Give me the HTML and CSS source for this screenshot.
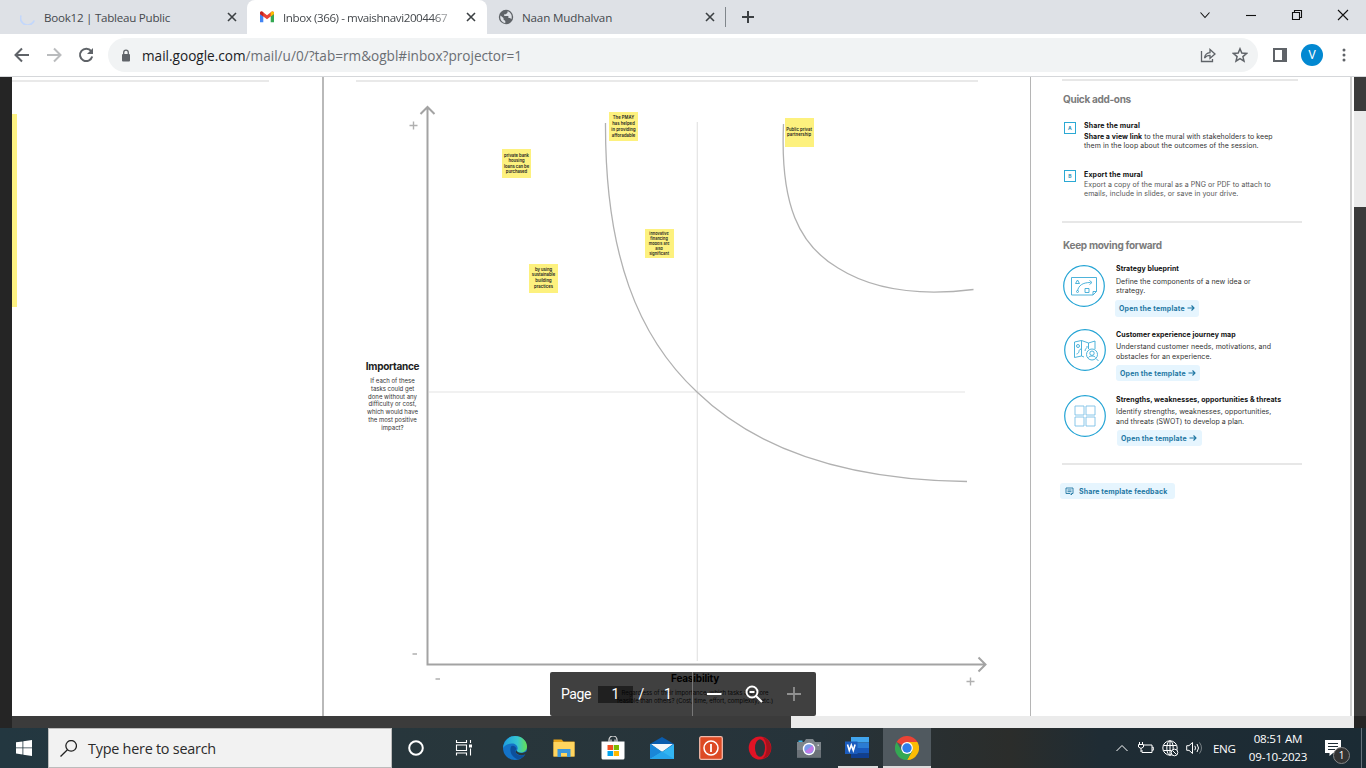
FILE: index.html
```html
<!DOCTYPE html>
<html lang="en">
<head>
<meta charset="utf-8">
<title>Inbox</title>
<link rel="stylesheet" href="styles.css">
</head>
<body>
<div class="screen">
  <header class="tabs">
    <div class="tab tab-first">
      <svg class="fav" viewBox="0 0 16 16"><path d="M1 6.500A7 7 0 0 0 14.200 11.500" fill="none" stroke="#c3d7fb" stroke-width="1.800"/></svg>
      <span class="tab-title">Book12 | Tableau Public</span>
      <svg class="close" viewBox="0 0 10 10"><path d="M1 1L9 9M9 1L1 9"/></svg>
    </div>
    <div class="tab tab-active">
      <svg class="fav" viewBox="0 0 16 16"><path d="M1 13.300V4.500L4.300 7v6.300z" fill="#4285f4"/><path d="M11.700 13.300V7L15 4.500v8.800z" fill="#34a853"/><path d="M1 5V4c0-1.600 1.500-1.900 2.500-1.200L8 6.200l4.500-3.400C13.500 2.100 15 2.400 15 4v1L8 10.200z" fill="#ea4335"/><path d="M11.700 3.400l.8-.6C13.500 2.100 15 2.400 15 4v1l-3.300 2.500z" fill="#fbbc04"/><path d="M1 5V4c0-1.600 1.500-1.900 2.500-1.200l.8.6v4.100z" fill="#c5221f"/></svg>
      <span class="tab-title fade">Inbox (366) - mvaishnavi2004467</span>
      <svg class="close" viewBox="0 0 10 10"><path d="M1 1L9 9M9 1L1 9"/></svg>
    </div>
    <div class="tab tab-last">
      <svg class="fav" viewBox="0 0 16 16"><circle cx="8" cy="8" r="7.200" fill="#5f6368"/><path d="M2.500 6.500l3 2.500v1.500L7.300 12v2.200A6 6 0 0 1 2.500 6.500zM9.500 2.200v1.600L7.800 5.300H6.200v1.600h4.200v2h1.700l1.200 1.300A6 6 0 0 0 9.500 2.200z" fill="#dee1e6"/></svg>
      <span class="tab-title">Naan Mudhalvan</span>
      <svg class="close" viewBox="0 0 10 10"><path d="M1 1L9 9M9 1L1 9"/></svg>
    </div>
    <svg class="newtab" viewBox="0 0 12 12"><path d="M6 0v12M0 6h12" stroke="#3c4043" stroke-width="2"/></svg>
    <div class="winctl">
      <svg viewBox="0 0 12 12"><path d="M1.500 3.500L6 8.500l4.500-5"/></svg>
      <svg viewBox="0 0 12 12"><path d="M1 6.500h10"/></svg>
      <svg viewBox="0 0 12 12"><path d="M1.500 3.500h7v7h-7zM3.500 3.500v-2h7v7h-2"/></svg>
      <svg viewBox="0 0 12 12"><path d="M1 1l10 10M11 1L1 11"/></svg>
    </div>
  </header>
  <nav class="toolbar">
    <svg class="nav back" viewBox="0 0 16 16"><path d="M15 8H2M8 1.500L1.500 8L8 14.500" stroke="#5f6368"/></svg>
    <svg class="nav" viewBox="0 0 16 16"><path d="M1 8h13M8 1.500L14.500 8L8 14.500" stroke="#babcbe"/></svg>
    <svg class="nav" viewBox="0 0 16 16"><path d="M13.200 4.200A6.200 6.200 0 1 0 14.200 9.500" stroke="#5f6368"/><path d="M15 1v6H9z" fill="#5f6368"/></svg>
    <div class="omnibox">
      <svg class="lock" viewBox="0 0 10 13"><rect x="1" y="5" width="8" height="7.500" rx="1" fill="#5f6368"/><path d="M2.700 5V3.500a2.300 2.300 0 0 1 4.600 0V5" fill="none" stroke="#5f6368" stroke-width="1.300"/></svg>
      <span class="url"><b>mail.google.com</b>/mail/u/0/?tab=rm&amp;ogbl#inbox?projector=1</span>
      <svg class="share" viewBox="0 0 16 16"><path d="M1.500 4v10.500h11V12M4.500 11C5 7.500 7 5.800 10 5.600V2.500L15 7l-5 4.300V8.300C7.500 8.300 6 9 4.500 11z"/></svg>
      <svg class="star" viewBox="0 0 16 16"><path d="M8 1.800l1.800 4.300 4.700.4-3.600 3.100 1.100 4.600L8 11.700l-4 2.500 1.100-4.600L1.500 6.500l4.700-.4z"/></svg>
    </div>
    <svg class="side" viewBox="0 0 14 14"><path d="M1 1h12v12H1z" fill="none" stroke="#5f6368" stroke-width="2"/><path d="M9 1h4v12H9z" fill="#5f6368"/></svg>
    <span class="avatar">V</span>
    <svg class="more" viewBox="0 0 4 14"><circle cx="2" cy="2" r="1.500"/><circle cx="2" cy="7" r="1.500"/><circle cx="2" cy="12" r="1.500"/></svg>
  </nav>

  <main class="viewer">
    <div class="gutter"></div>
    <div class="board">
      <section class="col-left"><div class="rule-left"></div><div class="strip"></div></section>
      <section class="canvas">
        <svg class="chart" viewBox="324 77 706 639">
          <path d="M356 81h622" stroke="#e9e9e9" stroke-width="2"/>
          <path d="M697.300 122v539" stroke="#e4e4e4" stroke-width="1.200"/>
          <path d="M429 392h536" stroke="#e4e4e4" stroke-width="1.200"/>
          <path d="M605.500 123C605 255 638 337 697 392C763 456 860 480 967 481.500" class="curve"/>
          <path d="M783.500 124C780 205 799 245 838 268C873 290 920 296 973.500 289.500" class="curve"/>
          <path d="M427.500 108v556.500H985M420.500 114l7-7 7 7M978.500 657.500l7 7-7 7" class="axis"/>
          <path d="M409.500 125.500h8M413.500 121.500v8M412.500 654h4.500M435.500 679h4.500M966.500 681.500h8M970.500 677.500v8" stroke="#b0b0b0" stroke-width="1.400"/>
        </svg>
        <div class="importance"><h2>Importance</h2><p>If each of these<br>tasks could get<br>done without any<br>difficulty or cost,<br>which would have<br>the most positive<br>impact?</p></div>
        <div class="feasibility"><h2>Feasibility</h2><p>Regardless of their importance, which tasks are more<br>feasible than others? (Cost, time, effort, complexity, etc.)</p></div>
        <div class="note n1">The PMAY<br>has helped<br>in providing<br>afforadable</div>
        <div class="note n2">private bank<br>housing<br>loans can be<br>purchased</div>
        <div class="note n3">by using<br>sustainable<br>building<br>practices</div>
        <div class="note n4">innovative<br>financing<br>models are<br>also<br>significant</div>
        <div class="note n5">Public privat<br>partnership</div>
        <div class="pager">
          <span class="pg">Page</span><span class="pg-input">1</span><span class="pg-slash">/</span><span class="pg-total">1</span>
          <i class="pg-div"></i>
          <svg class="pg-minus" viewBox="0 0 16 16"><path d="M1 8h14.500" stroke="#fff" stroke-width="2"/></svg>
          <svg class="pg-zoom" viewBox="0 0 18 18"><circle cx="7" cy="7" r="5.500" fill="none" stroke="#fff" stroke-width="2"/><path d="M11 11l6 6M4.500 7h5" stroke="#fff" stroke-width="2"/></svg>
          <svg class="pg-plus" viewBox="0 0 16 16"><path d="M8 1v14M1 8h14" stroke="#909090" stroke-width="1.800"/></svg>
        </div>
      </section>
      <aside class="panel">
        <div class="rule r1"></div>
        <h3 class="head h-quick">Quick add-ons</h3>
        <div class="addon a1"><span class="box">A</span><div><h4>Share the mural</h4><p><b>Share a view link</b> to the mural with stakeholders to keep<br>them in the loop about the outcomes of the session.</p></div></div>
        <div class="addon a2"><span class="box">B</span><div><h4>Export the mural</h4><p>Export a copy of the mural as a PNG or PDF to attach to<br>emails, include in slides, or save in your drive.</p></div></div>
        <div class="rule r2"></div>
        <h3 class="head h-keep">Keep moving forward</h3>
        <div class="tpl p1">
          <svg class="disc" viewBox="0 0 42 42"><circle cx="21" cy="21" r="20.300" class="ring"/><path d="M8.500 12.500h25v14l-3.500 3.500h-21.500zM33.500 26.500h-3.500v3.500M12.500 18.500l2-3.500 2 3.500zM22 23.500h4v4h-4zM14.500 26c1-5.500 5-8.500 13-8.500M26.500 15.500l2.500 2-2.500 2" class="ico"/><circle cx="14.500" cy="26.500" r="1" class="ico"/></svg>
          <div><h4>Strategy blueprint</h4><p>Define the components of a new idea or<br>strategy.</p><a class="btn"><span>Open the template</span><svg class="arr" viewBox="0 0 8 8"><path d="M.5 4h6M4.500 1.500L7 4 4.500 6.500"/></svg></a></div>
        </div>
        <div class="tpl p2">
          <svg class="disc" viewBox="0 0 42 42"><circle cx="21" cy="21" r="20.300" class="ring"/><path d="M20 28l-2.500-1-7 1.500V13l7-1.500 7 2.500 6.500-2v8M17.500 11.500V27M24.500 14v6M12.500 25c4-1 1-4 4.500-5M21 22c0-3 3-3 2-5" class="ico"/><circle cx="14" cy="17" r="1.500" class="ico"/><circle cx="28" cy="25.500" r="5.500" class="ico"/><circle cx="28" cy="24.200" r="2.200" class="ico"/><path d="M24.500 28.500c1-2 6-2 7 0M32 29.500l2.500 2.500" class="ico"/></svg>
          <div><h4>Customer experience journey map</h4><p>Understand customer needs, motivations, and<br>obstacles for an experience.</p><a class="btn"><span>Open the template</span><svg class="arr" viewBox="0 0 8 8"><path d="M.5 4h6M4.500 1.500L7 4 4.500 6.500"/></svg></a></div>
        </div>
        <div class="tpl p3">
          <svg class="disc" viewBox="0 0 42 42"><circle cx="21" cy="21" r="20.300" class="ring"/><path d="M11 11h9v9h-9zM22 11h9v9h-9zM11 22h9v9h-9zM22 22h9v9h-9z" class="ico sq"/></svg>
          <div><h4>Strengths, weaknesses, opportunities &amp; threats</h4><p>Identify strengths, weaknesses, opportunities,<br>and threats (SWOT) to develop a plan.</p><a class="btn"><span>Open the template</span><svg class="arr" viewBox="0 0 8 8"><path d="M.5 4h6M4.500 1.500L7 4 4.500 6.500"/></svg></a></div>
        </div>
        <div class="rule r3"></div>
        <a class="btn feedback"><svg class="chat" viewBox="0 0 9 9"><path d="M1 1h7v5.500H6.500V8L5 6.500H1zM2.500 3h4M2.500 4.700h4"/></svg><span>Share template feedback</span></a>
      </aside>
    </div>
    <div class="vscroll"><div class="vthumb"></div></div>
    <div class="gutter"></div>
    <div class="hscroll"><div class="hthumb"></div></div>
    <div class="corner"></div>
  </main>

  <footer class="taskbar">
    <div class="start"><svg viewBox="0 0 16 16"><path d="M0 2.300L6.500 1.400v6.100H0zM7.300 1.300L16 0v7.500H7.300zM0 8.300h6.500v6.200L0 13.600zM7.300 8.300H16V16l-8.700-1.300z" fill="#fff"/></svg></div>
    <div class="search"><svg viewBox="0 0 16 16"><circle cx="10.500" cy="5.500" r="5" /><path d="M7 9.200L.5 15.500"/></svg><span>Type here to search</span></div>
    <div class="sys"><svg viewBox="0 0 24 24"><circle cx="12" cy="12" r="6.800" fill="none" stroke="#fff" stroke-width="2"/></svg></div>
    <div class="sys"><svg viewBox="0 0 24 24"><path d="M4.500 4v2.500h10V4M4.500 19.500V17h10v2.500M4.500 9h10v5.500h-10zM18.500 4v3M18.500 12.500v7" fill="none" stroke="#fff" stroke-width="1.100"/><path d="M17 8.500h3v3h-3z" fill="#fff"/></svg></div>
    <div class="apps">
      <div class="app"><svg viewBox="0 0 24 24"><defs><linearGradient id="eg" x1="0" x2="1"><stop offset="0" stop-color="#1e9ee0"/><stop offset=".6" stop-color="#36c6d0"/><stop offset="1" stop-color="#66e04f"/></linearGradient></defs><circle cx="12" cy="12" r="12" fill="#1473c8"/><path d="M.3 10C1.500 4 6.500 0 12 0c7 0 12 5 12 10.500 0 4-3 6-6 6-2.500 0-4.500-1-4-2.200C16 11 13 7.500 9 7.500 5 7.500 1.500 9 .3 12z" fill="url(#eg)"/><path d="M8 10.500c-2 5 1 11 7 13A12 12 0 0 0 22 18.500c-4 2-9 1-9.500-2.500-.3-1.700.5-2.500 1-3-1-3-4-4-5.500-2.500z" fill="#0d4f9c"/><path d="M13.500 14.300C15 18 20 17.500 23.800 15.200l.7 2.300-2.500 1c-4 1.500-8.500.5-9.500-2.500z" fill="#29363c"/></svg></div>
      <div class="app"><svg viewBox="0 0 24 24"><path d="M1.500 3.500h8l2 2h11v15h-21z" fill="#e7a419"/><path d="M1.500 6h21v14.500h-21z" fill="#ffd55f"/><path d="M5.500 13h13v8h-3.500v-4H9v4H5.500z" fill="#3b97dc"/></svg></div>
      <div class="app"><svg viewBox="0 0 24 24"><path d="M.5 5.500h23V22q0 1.500-1.500 1.500H2Q.5 23.500.5 22z" fill="#fff"/><path d="M8 6V4a4 4 0 0 1 8 0v2M10 6V3.500M14 6V3.500" fill="none" stroke="#ddd" stroke-width="1.200"/><path d="M6.500 9H12v5H6.500z" fill="#f25022"/><path d="M12.700 9H18v5h-5.300z" fill="#7fba00"/><path d="M6.500 15H12v5H6.500z" fill="#00a4ef"/><path d="M12.700 15H18v5h-5.300z" fill="#ffb900"/></svg></div>
      <div class="app"><svg viewBox="0 0 24 24"><path d="M0 8L12 1l12 7-3 6H3z" fill="#0a5cad"/><path d="M1 8h22l-11 8z" fill="#f4f7fa"/><path d="M0 8l12 8 12-8v15H0z" fill="#33b5f2"/><path d="M0 23V8l12 8z" fill="#1a86d8"/><path d="M0 23l12-7.500L24 23z" fill="#27a5ec"/></svg></div>
      <div class="app"><svg viewBox="0 0 24 24"><rect x=".7" y=".7" width="22.600" height="22.600" rx="1.500" fill="#dd4a24" stroke="#f0b8a8" stroke-width="1.300"/><circle cx="12" cy="12" r="7" fill="none" stroke="#fff" stroke-width="1.500"/><path d="M12 8v8" stroke="#fff" stroke-width="1.800"/></svg></div>
      <div class="app"><svg viewBox="0 0 24 24"><ellipse cx="12" cy="12" rx="11.300" ry="11.500" fill="#e01325"/><path d="M14 1.200C26 3 26 21 14 22.800c6-3 6-18.500 0-21.600z" fill="#a5121c"/><ellipse cx="12" cy="12" rx="5" ry="8.700" fill="#29363c"/></svg></div>
      <div class="app"><svg viewBox="0 0 24 24"><path d="M0 6h7l2-3h7l2 3h6v15.500H0z" fill="#7d858b"/><path d="M0 14h24v7.500H0z" fill="#6b7278"/><path d="M1.500 4.500h4V6h-4z" fill="#35b6ea"/><circle cx="12" cy="13" r="6.200" fill="#fff"/><circle cx="12" cy="13" r="4.800" fill="#7b9bea"/><path d="M8 15.500l7.500-6A4.800 4.800 0 0 1 8 15.500z" fill="#c07ae4"/><path d="M20.500 8.500h1.500V10h-1.500z" fill="#d0d4d6"/></svg></div>
      <div class="app word"><svg viewBox="0 0 24 24"><path d="M6 1h18v5.500H6z" fill="#41a5ee"/><path d="M6 6.500h18V12H6z" fill="#2b7cd3"/><path d="M6 12h18v5.500H6z" fill="#185abd"/><path d="M6 17.500h18V22H6z" fill="#103f91"/><path d="M0 5.500h12.500V18H0z" fill="#1b5cbe"/><path d="M2.500 8.500l1.800 6 2-5.500 2 5.500 1.800-6" fill="none" stroke="#fff" stroke-width="1.600"/></svg></div>
      <div class="app chrome"><svg viewBox="0 0 24 24"><path d="M12 12L1.600 6A12 12 0 0 1 22.400 6z" fill="#ea4335"/><path d="M12 6h10.400A12 12 0 0 1 12 24l5.200-9z" fill="#fbbc04"/><path d="M1.600 6l5.200 9L12 18l5.200-3L12 24A12 12 0 0 1 1.600 6z" fill="#34a853"/><circle cx="12" cy="12" r="5.900" fill="#fff"/><circle cx="12" cy="12" r="4.700" fill="#2f7de9"/></svg></div>
    </div>
    <div class="tray">
      <svg class="up" viewBox="0 0 12 8"><path d="M.5 7L6 1.500 11.500 7"/></svg>
      <svg class="bat" viewBox="0 0 16 12"><path d="M6 3h8v7.500H4V8M14 5.200h1.300v3H14M1.500 0v2.500M4.500 0v2.500M.5 2.500h5V5L3 6.500.5 5zM3 6.500V10"/></svg>
      <svg class="net" viewBox="0 0 17 17"><circle cx="8" cy="8" r="7.200"/><ellipse cx="8" cy="8" rx="3.200" ry="7.200"/><path d="M1.500 5.500h13M1.500 10.500h8M8 1v14"/><circle cx="12.500" cy="12.500" r="3.300" fill="#1e2c34"/><path d="M10.500 10.500l4 4"/></svg>
      <svg class="vol" viewBox="0 0 17 14"><path d="M.7 4.700H3L6.500 1.500v11L3 9.300H.7zM8.800 4.800q1.500 2.200 0 4.400M11 3q3 4 0 8"/><path d="M13.500 1.500q4 5.500 0 11" opacity=".4"/></svg>
      <span class="lang">ENG</span>
      <div class="clock"><span>08:51 AM</span><span>09-10-2023</span></div>
      <div class="action"><svg viewBox="0 0 16 16"><path d="M0 0h16v13H8l-3.500 3V13H0z" fill="#fff"/><path d="M3 3.500h10M3 6.500h10M3 9.500h7" stroke="#1e2c34"/></svg><span class="badge">1</span></div>
      <i class="peek"></i>
    </div>
  </footer>
</div>
</body>
</html>
```

FILE: styles.css
```css
* { box-sizing: border-box; }
body { margin: 0; font-family: "Open Sans", "Noto Sans", sans-serif; overflow: hidden; }
h2, h3, h4, p { margin: 0; }
svg { display: block; flex: none; }
.screen { width: 1366px; height: 768px; display: flex; flex-direction: column; }

.tabs { height: 34px; background: #dee1e6; display: flex; align-items: center; }
.tab { height: 34px; display: flex; align-items: center; color: #45494d; font-size: 11.6px; letter-spacing: -.25px; }
.tab-first { width: 247px; padding: 0 10px 0 20px; border-bottom-right-radius: 8px; }
.tab-active { width: 240px; padding: 0 11px 0 12px; background: #fff; border-radius: 8px 8px 0 0; }
.tab-last { width: 239px; padding: 0 11px; background: linear-gradient(#80868b, #80868b) right center / 1px 20px no-repeat; letter-spacing: -.15px; }
.fav { width: 16px; height: 16px; margin-right: 8px; }
.tab-title { flex: 1; white-space: nowrap; overflow: hidden; }
.tab .close { width: 10px; height: 10px; }
.close path { stroke: #3c4043; stroke-width: 1.6; fill: none; }
.fade { -webkit-mask-image: linear-gradient(90deg, #000 84%, transparent); mask-image: linear-gradient(90deg, #000 84%, transparent); margin-right: 6px; letter-spacing: -.42px; }
.newtab { width: 12px; height: 12px; margin-left: 16px; }
.winctl { margin-left: auto; display: flex; gap: 34px; padding-right: 17px; margin-top: -5px; }
.winctl svg { width: 12px; height: 12px; fill: none; stroke: #111; stroke-width: 1.1; }

.toolbar { height: 43px; border-bottom: 1px solid #d5d7da; background: #fff; display: flex; align-items: center; padding-left: 14px; }
.nav { width: 16px; height: 16px; fill: none; stroke-width: 2; margin-right: 16px; }
.omnibox { width: 1150px; height: 34px; border-radius: 17px; background: #f1f3f4; display: flex; align-items: center; padding: 0 10px 0 13px; margin-left: -2px; }
.lock { width: 10px; height: 13px; margin-right: 11px; }
.url { font-size: 13.6px; color: #6a6e73; white-space: nowrap; margin-right: auto; }
.url b { font-weight: 400; color: #202124; }
.share, .star { width: 16px; height: 16px; fill: none; stroke: #5f6368; stroke-width: 1.3; }
.star { margin-left: 16px; stroke-width: 1.5; }
.side { width: 14px; height: 14px; margin-left: 15px; }
.avatar { width: 22px; height: 22px; border-radius: 50%; background: #0288d1; color: #fff; font: 12px/22px Roboto, sans-serif; text-align: center; margin-left: 14px; }
.more { width: 4px; height: 14px; margin-left: 19px; fill: #5f6368; }

.viewer { height: 651px; display: grid; grid-template-columns: 12px 1342px 12px; grid-template-rows: 639px 12px; }
.gutter, .corner { background: #252525; }
.vscroll { background: #3b3b3b; padding-top: 34px; }
.vthumb { height: 96px; background: #ebebeb; }
.hscroll { background: #3b3b3b; padding-left: 779px; }
.hthumb { height: 12px; background: #ebebeb; }

.board { background: #fff; display: flex; border-right: 1px solid #fff; font-family: Inter, sans-serif; }
.col-left { width: 312px; border-right: 2px solid #b9b9b9; padding-top: 3px; }
.rule-left { height: 2px; width: 257px; background: #e9e9e9; }
.strip { width: 5px; height: 193px; margin-top: 32px; background: #fdf283; }
.canvas { width: 707px; border-right: 1px solid #b5b5b5; position: relative; }
.chart { width: 706px; height: 639px; }
.curve { fill: none; stroke: #b1b1b1; stroke-width: 1.3; }
.axis { fill: none; stroke: #a3a3a3; stroke-width: 2; }
.importance { position: absolute; left: 28px; top: 282px; width: 81px; text-align: center; color: #333; font-size: 6px; line-height: 7.8px; white-space: nowrap; }
.importance h2 { font-size: 10px; line-height: 14px; color: #222; margin-bottom: 4px; letter-spacing: -.27px; }
.feasibility { position: absolute; left: 271px; top: 594px; width: 200px; text-align: center; color: #222; font-size: 6px; line-height: 8px; white-space: nowrap; letter-spacing: -.08px; }
.feasibility h2 { font-size: 10px; line-height: 14px; color: #000; margin-bottom: 4px; letter-spacing: -.19px; }
.note { position: absolute; width: 29px; height: 29px; background: #fdf17e; color: #222; text-align: center; white-space: nowrap; font-size: 4.2px; font-weight: 600; }
.n1 { left: 285px; top: 35px; padding-top: 2.5px; line-height: 6px; letter-spacing: .04px; }
.n2 { left: 178px; top: 72px; padding-top: 4px; line-height: 5.4px; letter-spacing: -.03px; }
.n3 { left: 205px; top: 187px; padding-top: 2.5px; line-height: 5.8px; }
.n4 { left: 320.6px; top: 152px; padding-top: 2px; line-height: 5px; font-size: 3.8px; letter-spacing: .05px; }
.n5 { left: 460.6px; top: 41px; padding-top: 9px; line-height: 5px; letter-spacing: .04px; }

.pager { position: absolute; left: 226px; top: 595px; width: 266px; height: 44px; border-radius: 2px; background: rgba(0, 0, 0, .75); color: #fff; font: 14px/16px Roboto, sans-serif; display: flex; align-items: center; padding-left: 11px; }
.pg { width: 37px; letter-spacing: -.4px; }
.pg-input { width: 35px; height: 17px; background: rgba(0, 0, 0, .5); text-align: center; line-height: 17px; }
.pg-slash { width: 17px; text-align: center; }
.pg-total { width: 36px; text-align: center; }
.pg-div { width: 1px; height: 44px; background: #777; margin-left: 6px; }
.pg-minus { width: 16px; height: 16px; margin-left: 13px; }
.pg-zoom { width: 18px; height: 18px; margin-left: 23px; }
.pg-plus { width: 16px; height: 16px; margin-left: 23px; }

.panel { width: 321px; border-right: 2px solid #cfcfcf; padding: 2px 0 0 31px; color: #333; font-size: 7px; letter-spacing: .06px; }
.rule { height: 2px; background: #e7e7e7; width: 240px; }
.r1 { width: 236px; }
.head { font-size: 10px; line-height: 12px; color: #7b7b7b; padding-left: 1px; letter-spacing: -.3px; }
.h-quick { margin-top: 12px; }
.panel h4 { font-size: 7px; line-height: 10px; color: #111; white-space: nowrap; }
.panel p { line-height: 9.2px; white-space: nowrap; }
.panel p b { color: #111; }
.addon { display: flex; height: 34px; }
.addon h4 { letter-spacing: .15px; }
.box { width: 12px; height: 12px; border: 1px solid #2ba9d4; color: #2b8fb5; font-size: 5px; line-height: 10px; font-weight: 700; text-align: center; margin: 1px 8px 0 2px; flex: none; }
.a1 { margin-top: 16px; }
.a1 p { margin-top: 1px; }
.a2 { margin-top: 15px; color: #555; }
.a2 .box { margin-top: 0; }
.r2 { margin-top: 17px; }
.h-keep { margin-top: 16px; }
.tpl { display: flex; height: 52px; }
.disc { width: 42px; height: 42px; margin: 1px 11px 0 1px; }
.ring { fill: none; stroke: #22a3d4; stroke-width: 1.2; }
.ico { fill: none; stroke: #3aaad6; stroke-width: .9; }
.sq { stroke: #7bbfe6; }
.p1 { margin-top: 13px; }
.p1 p { margin-top: 2.5px; }
.p2 { margin-top: 13px; }
.p2 .disc, .p3 .disc { margin-left: 2px; margin-right: 10px; }
.p2 .disc { margin-top: 0; }
.p2 h4, .p3 h4 { padding-top: 1px; line-height: 10px; }
.p2 p, .p3 p { margin-top: 2px; line-height: 10px; }
.p3 { margin-top: 13px; }
.btn { display: flex; align-items: center; width: 84px; height: 16px; border-radius: 3px; background: #e6f5fe; color: #1f77a3; font-weight: 700; white-space: nowrap; padding-left: 4px; letter-spacing: .17px; }
.p1 .btn { height: 17px; margin: 5px 0 0 -1px; }
.p2 .btn { margin-top: 3px; }
.p3 .btn { margin: 3px 0 0 1px; width: 85px; }
.arr { width: 8px; height: 8px; margin-left: 2px; fill: none; stroke: #1f77a3; stroke-width: 1.1; }
.r3 { margin-top: 17px; }
.feedback { width: 115px; margin: 18px 0 0 -2px; padding-left: 5px; letter-spacing: .13px; }
.chat { width: 9px; height: 9px; margin-right: 5px; fill: none; stroke: #1f77a3; stroke-width: .9; }

.taskbar { height: 40px; display: flex; background: linear-gradient(90deg, #233740 0, #28363b 500px, #26333a 820px, #2b2d2b 1010px, #1f2c34 1100px, #1b2b34 1366px); color: #fff; }
.start, .sys { width: 48px; display: flex; align-items: center; justify-content: center; }
.start svg { width: 16px; height: 16px; }
.sys svg { width: 24px; height: 24px; }
.search { width: 344px; background: #f2f2f2; border: 1px solid #bcbcbc; display: flex; align-items: center; padding-left: 11px; color: #2b2b2b; font-size: 14.4px; letter-spacing: -.24px; white-space: nowrap; }
.search svg { width: 17px; height: 17px; margin-right: 11px; fill: none; stroke: #222; stroke-width: 1.2; }
.apps { display: flex; padding-left: 2px; }
.app { width: 49px; display: flex; align-items: center; justify-content: center; }
.app svg { width: 24px; height: 24px; }
.word { width: 48px; margin-right: 2px; background: linear-gradient(#dcdcdc, #dcdcdc) 5px bottom / 40px 2px no-repeat; }
.chrome { width: 48px; background: #50595f; border-bottom: 2px solid #dcdcdc; padding-top: 2px; }
.tray { margin-left: auto; display: flex; align-items: center; font-size: 11.6px; }
.tray svg { fill: none; stroke: #fff; }
.up { width: 12px; height: 8px; margin-right: 10px; }
.bat { width: 16px; height: 12px; margin-right: 8px; }
.net { width: 17px; height: 17px; margin-right: 7px; }
.vol { width: 17px; height: 14px; margin-right: 10px; }
.lang { width: 35px; letter-spacing: -.35px; }
.clock { display: flex; flex-direction: column; align-items: center; width: 60px; line-height: 18px; white-space: nowrap; letter-spacing: -.22px; }
.action { position: relative; margin-left: 17px; width: 36px; height: 24px; padding-top: 4px; }
.action svg { width: 16px; height: 16px; stroke: none; }
.badge { position: absolute; left: 8px; top: 11px; width: 17px; height: 17px; border-radius: 50%; background: #333; border: 1px solid #888; font-size: 10px; line-height: 15px; text-align: center; }
.peek { width: 1px; height: 40px; background: #65717a; margin-right: 4px; }
```
